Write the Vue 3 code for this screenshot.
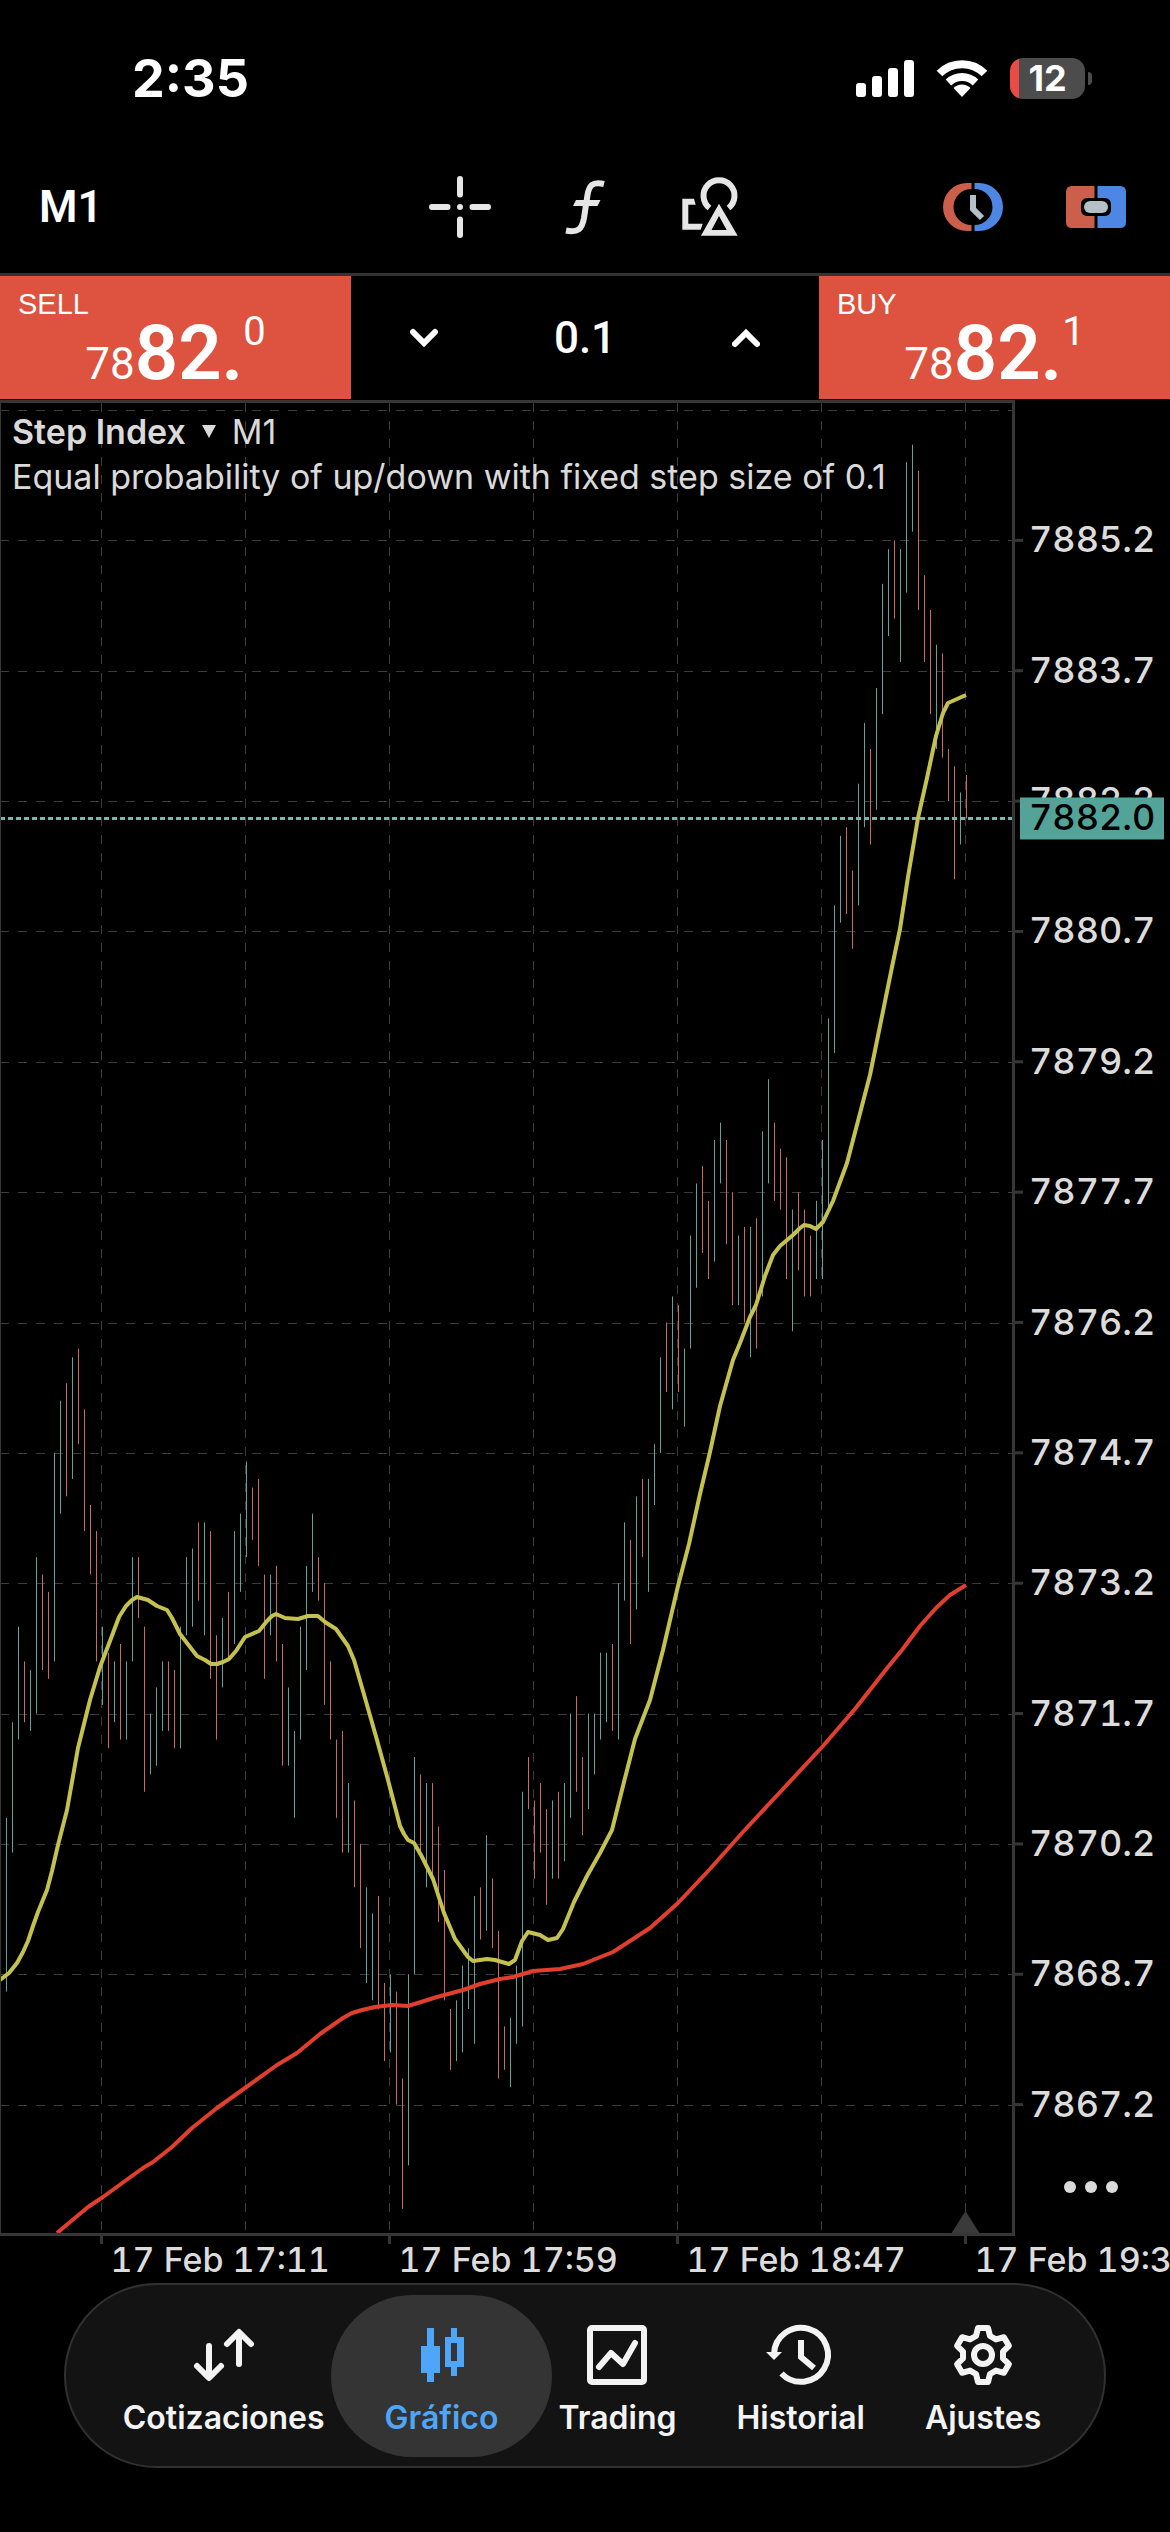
<script setup>
import { ref } from 'vue'

const volume = ref('0.1')

// Price scale: values are tenths of a point above 7860.
const yOf = (tenths) => 540.4 + (252 - tenths) * 8.69
const xOf = (index) => index * 6 + 0.5

const priceLabels = Array.from({ length: 13 }, (_, i) => {
  const tenths = 252 - i * 15
  return { y: yOf(tenths), text: (7860 + tenths / 10).toFixed(1) }
})
const gridRows = [yOf(267), ...priceLabels.map((label) => label.y)]
const gridColumns = [101.5, 245.5, 389.5, 533.5, 677.5, 821.5, 965.5]
const timeLabels = [
  { x: 101.5, text: '17 Feb 17:11' },
  { x: 389.5, text: '17 Feb 17:59' },
  { x: 677.5, text: '17 Feb 18:47' },
  { x: 965.5, text: '17 Feb 19:35' },
]
const currentY = yOf(220)

// high, low and direction (u = up, d = down) of each one-minute bar
const bars = `
105 85 u,116 101 u,127 114 u,123 116 d,122 115 u,135 117 u,133 122 d,131 121 d,147 123 u,153 140 u,
155 142 d,158 144 u,159 148 d,152 138 d,141 133 d,138 123 d,127 118 u,124 113 d,123 116 u,125 114 d,
123 114 u,135 123 u,135 128 d,127 108 d,117 110 u,120 111 u,123 115 u,123 115 d,122 113 d,127 113 u,
135 126 u,136 127 u,139 130 d,139 126 u,138 121 d,126 114 d,128 120 u,131 123 d,138 125 u,140 131 u,
146 135 u,143 137 d,144 134 d,133 121 d,133 126 u,134 123 d,125 111 d,120 111 u,115 105 u,127 114 u,
134 122 u,140 131 u,135 130 d,132 118 d,123 114 d,114 105 d,115 101 d,109 101 u,107 97 d,102 90 d,
97 86 u,94 84 u,96 83 d,86 77 d,87 78 u,85 72 d,75 60 d,87 65 u,112 87 u,110 101 d,
109 97 u,109 98 d,104 93 d,99 84 d,83 76 d,84 77 u,88 78 u,90 83 u,96 79 u,97 91 d,
103 92 u,98 90 d,92 75 d,81 76 d,82 74 u,88 79 u,108 81 u,112 106 d,107 98 d,109 101 d,
106 95 d,107 98 u,108 98 d,109 100 u,117 105 u,119 108 d,112 103 d,117 106 u,117 110 u,124 114 u,
124 116 u,125 115 d,132 114 u,139 130 u,137 125 d,142 129 u,144 135 d,144 131 u,148 141 u,158 147 u,
162 154 d,165 152 u,164 154 d,159 150 u,172 159 u,178 166 u,180 170 d,176 167 d,183 169 u,185 178 u,
183 171 d,177 164 d,172 164 u,173 162 d,173 158 u,174 159 d,184 165 u,190 178 u,185 176 d,182 175 d,
181 167 d,175 161 u,177 168 d,175 165 d,172 165 d,176 167 u,183 167 u,197 175 u,210 193 u,218 208 u,
219 209 d,214 205 d,224 210 u,231 219 u,228 217 d,235 221 u,247 232 u,251 241 u,252 243 d,251 238 u,
261 246 u,263 253 u,260 244 d,248 238 d,244 232 d,240 228 u,239 227 d,228 222 d,226 213 d,223 217 u,
225 220 d`
  .split(',')
  .map((entry, i) => {
    const [high, low, direction] = entry.trim().split(' ')
    return { x: xOf(i + 1), y1: yOf(+high), y2: yOf(+low), direction }
  })

const fastAverage =
  '0,1980 9,1973 17,1963 23,1952 28,1941 33,1926 38,1912 47,1890 52,1871 58,1845 67,1810 78,1748 90,1700 100,1667 110,1641 119,1617 126,1606 132,1600 137,1597 148,1600 157,1606 167,1610 172,1618 180,1634 197,1656 205,1660 211,1664 217,1664 223,1662 229,1659 236,1651 245,1637 259,1631 267,1621 272,1616 276,1614 285,1618 298,1619 308,1616 318,1616 325,1622 336,1629 348,1646 354,1660 365,1698 377,1740 388,1780 400,1826 404,1834 408,1840 414,1843 421,1855 433,1879 444,1913 455,1939 468,1957 473,1961 487,1959 495,1960 509,1964 515,1960 522,1941 528,1932 540,1935 548,1940 557,1938 563,1929 574,1902 587,1876 600,1853 612,1830 624,1782 635,1739 650,1700 663,1650 678,1586 689,1544 700,1494 710,1452 720,1406 733,1360 740,1343 750,1317 756,1305 765,1276 773,1255 780,1246 793,1235 800,1228 804,1225 810,1226 816,1229 823,1222 833,1201 847,1163 858,1121 870,1075 880,1026 892,967 900,929 908,877 918,818 927,778 936,736 943,713 948,703 966,695'
const slowAverage =
  '57,2233 88,2207 103,2197 125,2181 143,2168 153,2162 172,2147 192,2128 217,2108 245,2088 277,2065 297,2053 320,2034 343,2018 352,2013 362,2010 375,2007 392,2005 408,2006 437,1997 463,1990 480,1984 500,1979 513,1977 533,1971 560,1969 583,1964 613,1952 650,1928 678,1903 710,1869 742,1833 783,1789 823,1746 855,1709 888,1667 902,1650 920,1626 937,1607 950,1595 966,1585'

// Outline of a six-tooth gear centred on 30,30
const gearOutline = Array.from({ length: 6 }, (_, i) => (i * Math.PI) / 3)
  .flatMap((angle) =>
    [[-7, -19], [-5, -27], [5, -27], [7, -19]].map(([x, y]) => {
      const px = 30 + x * Math.cos(angle) - y * Math.sin(angle)
      const py = 30 + x * Math.sin(angle) + y * Math.cos(angle)
      return `${px.toFixed(1)},${py.toFixed(1)}`
    })
  )
  .join(' ')

const step = (delta) => {
  volume.value = Math.max(0.1, Number(volume.value) + delta).toFixed(1)
}
</script>

<template>
  <main class="screen">
    <header class="status">
      <time class="clock">2:35</time>
      <div class="indicators">
        <svg width="58" height="38" viewBox="0 0 58 38" fill="#fff" aria-label="Signal">
          <rect x="0" y="24" width="10" height="14" rx="3" />
          <rect x="16" y="17" width="10" height="21" rx="3" />
          <rect x="32" y="9" width="10" height="29" rx="3" />
          <rect x="48" y="1" width="10" height="37" rx="3" />
        </svg>
        <svg width="52" height="38" viewBox="0 0 52 38" aria-label="Wi-Fi">
          <g fill="none" stroke="#fff" stroke-width="8">
            <path d="M3.500 14.500A32 32 0 0 1 48.500 14.500" />
            <path d="M12.500 23.500A19.500 19.500 0 0 1 39.500 23.500" />
          </g>
          <path d="M26 38L17.500 29A12 12 0 0 1 34.500 29Z" fill="#fff" />
        </svg>
        <div class="battery"><span class="level">12</span></div>
      </div>
    </header>

    <nav class="toolbar" aria-label="Chart tools">
      <button class="timeframe">M1</button>
      <div class="tools">
        <button aria-label="Crosshair">
          <svg width="62" height="62" viewBox="0 0 62 62" stroke="#e6e6e6" stroke-width="6" stroke-linecap="round">
            <path d="M31 3V18.500M31 43.500V59M3 31H18.500M43.500 31H59M31 31h0.010" />
          </svg>
        </button>
        <button aria-label="Indicators">
          <svg width="60" height="60" viewBox="0 0 60 60" fill="none" stroke="#e6e6e6" stroke-width="6">
            <path d="M49 7C37 4 34 9 32.500 18L29 41C27 52 23 56 11 53.500" />
            <path d="M18 29L21 23H45.500L42.500 29Z" fill="#e6e6e6" stroke="none" />
          </svg>
        </button>
        <button aria-label="Objects">
          <svg width="60" height="60" viewBox="0 0 60 60" fill="#e6e6e6">
            <path d="M29.500 31A15.500 15.500 0 1 1 48.500 31" fill="none" stroke="#e6e6e6" stroke-width="6" />
            <path d="M2.300 21.700H14L15.700 27.700H8.300V46.700H22.700L20.700 52.700H2.300Z" />
            <path fill-rule="evenodd" d="M39 26.700L57.700 58.700H20.900ZM39 39L31.500 53H46.700Z" />
          </svg>
        </button>
      </div>
      <div class="modes">
        <button aria-label="Trading sessions">
          <svg width="60" height="48" viewBox="0 0 60 48">
            <path d="M28.500 0H24A24 24 0 0 0 24 48H28.500V42A18 18 0 0 1 28.500 6Z" fill="#cb5f4b" />
            <path d="M31.500 0H36A24 24 0 0 1 36 48H31.500V42A18 18 0 0 0 31.500 6Z" fill="#4e86e4" />
            <path d="M30 12V26L39 35" fill="none" stroke="#b4bfc6" stroke-width="6" />
          </svg>
        </button>
        <button aria-label="One-click trading">
          <svg width="60" height="42" viewBox="0 0 60 42">
            <path d="M28.500 0H6Q0 0 0 6V36Q0 42 6 42H28.500Z" fill="#cb5f4b" />
            <path d="M31.500 0H54Q60 0 60 6V36Q60 42 54 42H31.500Z" fill="#4e86e4" />
            <rect x="15" y="12" width="30" height="18" rx="6" fill="#000" />
            <rect x="18" y="15" width="24" height="12" rx="6" fill="#b4bfc6" />
          </svg>
        </button>
      </div>
    </nav>

    <section class="deal">
      <button class="quote">
        <span class="side">SELL</span>
        <span class="price"><span class="lead">78</span><b>82.</b><span class="point">0</span></span>
      </button>
      <div class="stepper">
        <button aria-label="Decrease volume" @click="step(-0.1)">
          <svg width="28" height="20" viewBox="0 0 28 20"><path d="M3 4L14 15L25 4" /></svg>
        </button>
        <input v-model="volume" aria-label="Volume" inputmode="decimal" />
        <button aria-label="Increase volume" @click="step(0.1)">
          <svg width="28" height="20" viewBox="0 0 28 20"><path d="M3 16L14 5L25 16" /></svg>
        </button>
      </div>
      <button class="quote">
        <span class="side">BUY</span>
        <span class="price"><span class="lead">78</span><b>82.</b><span class="point">1</span></span>
      </button>
    </section>

    <section class="chart">
      <svg class="plot" viewBox="0 400 1170 1883" aria-label="Step Index, M1">
        <g class="grid">
          <line v-for="y in gridRows" :key="y" x1="0" x2="1012" :y1="Math.round(y) + 0.5" :y2="Math.round(y) + 0.5" />
          <line v-for="x in gridColumns" :key="x" :x1="x" :x2="x" y1="403" y2="2233" />
        </g>
        <g class="bars">
          <line v-for="bar in bars" :key="bar.x" :class="bar.direction" :x1="bar.x" :x2="bar.x" :y1="bar.y1" :y2="bar.y2" />
        </g>
        <line class="current" x1="0" x2="1012" :y1="currentY" :y2="currentY" />
        <polyline class="average fast" :points="fastAverage" />
        <polyline class="average slow" :points="slowAverage" />
        <path class="marker" d="M965.500 2211L980 2234H951Z" />
        <path class="frame" d="M0 401.500H1013.500V2234.500H0" />
        <line class="edge" x1="0.500" x2="0.500" y1="401" y2="2234" />
        <g class="frame">
          <line v-for="label in priceLabels" :key="label.y" x1="1014" x2="1023" :y1="label.y" :y2="label.y" />
          <line v-for="label in timeLabels" :key="label.x" :x1="label.x" :x2="label.x" y1="2235" y2="2244" />
        </g>
        <g class="labels">
          <text v-for="label in priceLabels" :key="label.text" x="1029" :y="label.y + 12">{{ label.text }}</text>
          <text v-for="label in timeLabels" :key="label.text" class="time" :x="label.x + 9" y="2272">{{ label.text }}</text>
        </g>
        <rect class="tag" x="1020" :y="currentY - 21" width="144" height="42" />
        <text class="tag-text" x="1029" :y="currentY + 12">7882.0</text>
      </svg>
      <div class="caption">
        <button class="symbol"><strong>Step Index</strong><i></i>M1</button>
        <p>Equal probability of up/down with fixed step size of 0.1</p>
      </div>
      <button class="more" aria-label="More"><i></i><i></i><i></i></button>
    </section>

    <nav class="tabs" aria-label="Main">
      <button class="tab">
        <svg viewBox="0 0 60 60" class="line">
          <path d="M15 21V52M3 41L15 53L27 41M45 39V8M33 19L45 7L57 19" />
        </svg>
        Cotizaciones
      </button>
      <button class="tab active" aria-current="page">
        <svg viewBox="0 0 60 60" fill="currentColor">
          <path d="M15 3H22V21H28V48H22V57H15V48H9V21H15Z" />
          <path fill-rule="evenodd" d="M39 3H45V12H52V42H45V51H39V42H33V12H39ZM39 18V36H45V18Z" />
        </svg>
        Gráfico
      </button>
      <button class="tab">
        <svg viewBox="0 0 60 60" class="line">
          <rect x="3" y="3" width="54" height="54" rx="2" />
          <path d="M12 42L24 28L36 39L48 18" />
        </svg>
        Trading
      </button>
      <button class="tab">
        <svg viewBox="0 0 60 60" class="line sharp">
          <path d="M3 29A27 27 0 1 1 10.500 48.500" />
          <path d="M30 15V32L43 43" />
          <path d="M-5 27H11L3 35Z" fill="currentColor" stroke="none" />
        </svg>
        Historial
      </button>
      <button class="tab">
        <svg viewBox="0 0 60 60" class="line sharp">
          <polygon :points="gearOutline" stroke-linejoin="round" />
          <circle cx="30" cy="30" r="9" />
        </svg>
        Ajustes
      </button>
    </nav>
  </main>
</template>

<style>
body {
  background: #000;
}
</style>

<style scoped>
.screen {
  display: flex;
  flex-direction: column;
  padding-bottom: 64px;
  background: #000;
  color: #fff;
  font-family: Inter, "Liberation Sans", sans-serif;
}

button,
input {
  border: 0;
  padding: 0;
  background: none;
  color: inherit;
  font: inherit;
}

svg {
  display: block;
}

.status {
  display: flex;
  align-items: center;
  justify-content: space-between;
  height: 140px;
  padding: 16px 78px 0 132px;
  box-sizing: border-box;
}

.clock {
  font-size: 52px;
  font-weight: 700;
}

.indicators {
  display: flex;
  align-items: center;
  gap: 22px;
}

.battery {
  position: relative;
  width: 75px;
  height: 41px;
  margin-right: 7px;
}

.battery::after {
  content: "";
  position: absolute;
  right: -7px;
  top: 14px;
  width: 4px;
  height: 13px;
  border-radius: 0 4px 4px 0;
  background: #4c4c4c;
}

.level {
  display: block;
  height: 100%;
  border-radius: 13px;
  background: linear-gradient(90deg, #ea4b44 9px, #4c4c4c 9px);
  font-size: 36px;
  font-weight: 700;
  line-height: 41px;
  text-align: center;
}

.toolbar {
  display: grid;
  grid-template-columns: 1fr auto 1fr;
  align-items: center;
  height: 133px;
  padding: 0 13px;
}

.toolbar button {
  display: flex;
  align-items: center;
  justify-content: center;
}

.toolbar .timeframe {
  justify-self: start;
  margin-left: 26px;
  font: 600 44px Roboto, "Liberation Sans", sans-serif;
}

.tools,
.modes {
  display: flex;
}

.modes {
  justify-content: flex-end;
}

.tools button {
  width: 125px;
}

.modes button {
  width: 123px;
}

.deal {
  display: grid;
  grid-template-columns: 3fr 4fr 3fr;
  height: 124px;
  border-top: 3px solid #333;
}

.quote {
  display: grid;
  height: 123px;
  background: #dd5340;
  font-family: "Liberation Sans", sans-serif;
}

.quote > * {
  grid-area: 1 / 1;
}

.side {
  justify-self: start;
  align-self: start;
  padding: 12px 18px;
  font-size: 29px;
  line-height: 32px;
}

.price {
  display: flex;
  justify-content: center;
  align-items: baseline;
  align-self: end;
  height: 92px;
  font-family: Roboto, "Liberation Sans", sans-serif;
  line-height: 92px;
}

.lead {
  font-size: 44px;
}

.price b {
  font-size: 76px;
  font-weight: 600;
}

.point {
  align-self: flex-start;
  font-size: 40px;
  line-height: 50px;
}

.stepper {
  display: grid;
  grid-template-columns: 146px 1fr 146px;
  align-items: center;
}

.stepper button {
  display: flex;
  justify-content: center;
}

.stepper path {
  fill: none;
  stroke: #fff;
  stroke-width: 6;
  stroke-linecap: round;
}

.stepper input {
  width: 100%;
  min-width: 0;
  text-align: center;
  font: 500 44px Roboto, "Liberation Sans", sans-serif;
}

.chart {
  position: relative;
}

.plot {
  width: 100%;
  height: auto;
}

.grid line {
  stroke: #3c3c3c;
  stroke-dasharray: 9 9;
}

.bars .u {
  stroke: #64a197;
}

.bars .d {
  stroke: #c76b64;
}

.current {
  stroke: #6fb8aa;
  stroke-width: 3;
  stroke-dasharray: 5 3;
}

.average {
  fill: none;
  stroke-width: 4;
  stroke-linejoin: round;
}

.fast {
  stroke: #c5c151;
}

.slow {
  stroke: #e03f2e;
}

.marker {
  fill: #3a3a3a;
}

.frame {
  fill: none;
  stroke: #363636;
  stroke-width: 3;
}

.edge {
  stroke: #363636;
}

.labels,
.tag-text {
  font-size: 36px;
  font-weight: 500;
  font-variant-numeric: tabular-nums;
}

.labels {
  fill: #dcdcdc;
}

.time {
  font-size: 34px;
}

.tag {
  fill: #54a398;
}

.tag-text {
  fill: #000;
}

.caption {
  position: absolute;
  left: 12px;
  top: 9px;
  color: #dadada;
  font-size: 34px;
  line-height: 45px;
}

.caption p {
  margin: 0;
}

.symbol {
  display: flex;
  align-items: center;
  gap: 16px;
}

.symbol strong {
  font-weight: 600;
}

.symbol i {
  border: solid transparent;
  border-width: 13px 7px 0;
  border-top-color: #dadada;
}

.more {
  position: absolute;
  right: 52px;
  bottom: 90px;
  display: flex;
  gap: 9px;
}

.more i {
  width: 12px;
  height: 12px;
  border-radius: 50%;
  background: #dadada;
}

.tabs {
  display: flex;
  justify-content: center;
  align-items: center;
  height: 185px;
  margin: 0 64px;
  padding-right: 6px;
  box-sizing: border-box;
  border: 2px solid #303030;
  border-radius: 93px;
  background: #131313;
}

.tab {
  display: flex;
  flex-direction: column;
  align-items: center;
  gap: 15px;
  height: 162px;
  margin: 0 -24px;
  padding: 30px 54px 0;
  box-sizing: border-box;
  border-radius: 81px;
  color: #f3f3f3;
  font-size: 32px;
  font-weight: 600;
  line-height: 36px;
}

.tab svg {
  width: 60px;
  height: 60px;
  overflow: visible;
}

.active {
  background: #343434;
  color: #4fa6f8;
}

.line {
  fill: none;
  stroke: currentColor;
  stroke-width: 6;
  stroke-linecap: round;
  stroke-linejoin: round;
}

.sharp {
  stroke-linecap: butt;
  stroke-linejoin: miter;
}
</style>
